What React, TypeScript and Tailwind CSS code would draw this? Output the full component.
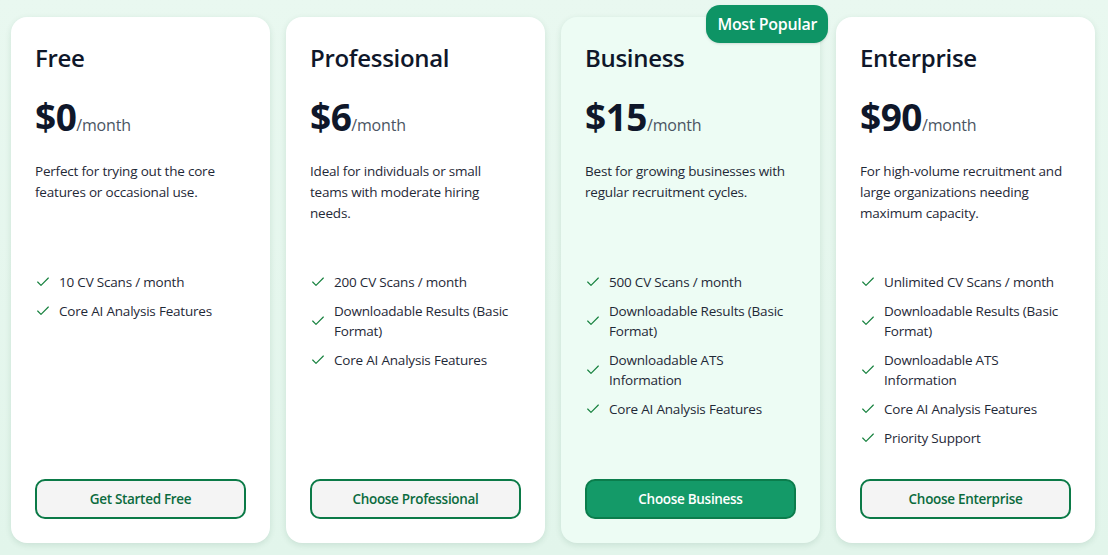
import { Check } from "lucide-react";

type Plan = {
  name: string;
  price: string;
  desc: string;
  features: string[];
  cta: string;
  popular?: boolean;
};

const plans: Plan[] = [
  {
    name: "Free",
    price: "$0",
    desc: "Perfect for trying out the core features or occasional use.",
    features: ["10 CV Scans / month", "Core AI Analysis Features"],
    cta: "Get Started Free",
  },
  {
    name: "Professional",
    price: "$6",
    desc: "Ideal for individuals or small teams with moderate hiring needs.",
    features: ["200 CV Scans / month", "Downloadable Results (Basic Format)", "Core AI Analysis Features"],
    cta: "Choose Professional",
  },
  {
    name: "Business",
    price: "$15",
    desc: "Best for growing businesses with regular recruitment cycles.",
    features: [
      "500 CV Scans / month",
      "Downloadable Results (Basic Format)",
      "Downloadable ATS Information",
      "Core AI Analysis Features",
    ],
    cta: "Choose Business",
    popular: true,
  },
  {
    name: "Enterprise",
    price: "$90",
    desc: "For high-volume recruitment and large organizations needing maximum capacity.",
    features: [
      "Unlimited CV Scans / month",
      "Downloadable Results (Basic Format)",
      "Downloadable ATS Information",
      "Core AI Analysis Features",
      "Priority Support",
    ],
    cta: "Choose Enterprise",
  },
];

function PlanCard({ plan }: { plan: Plan }) {
  return (
    <div
      className={`relative flex h-[526px] w-[259px] flex-col rounded-2xl px-6 pt-6 pb-6 shadow-[0_2px_6px_rgba(20,80,50,0.12)] ${
        plan.popular ? "bg-[#edfcf4]" : "bg-white"
      }`}
    >
      {plan.popular && (
        <span className="absolute -top-3 -right-2 flex h-[38px] items-center rounded-[14px] bg-[#0e9465] px-[11px] text-[16px] font-semibold tracking-[-0.3px] text-white shadow-sm">
          Most Popular
        </span>
      )}
      <h3 className="mt-px text-[24px] leading-8 font-semibold tracking-[-0.3px] text-[#0f172a]">{plan.name}</h3>
      <div className="mt-[23px] flex items-baseline">
        <span className="text-[37px] leading-10 font-bold tracking-[-0.5px] text-[#0f172a]">{plan.price}</span>
        <span className="text-[16px] tracking-[-0.2px] text-[#4b5563]">/month</span>
      </div>
      <p className="mt-6 h-[63px] text-[13.5px] leading-[21px] tracking-[-0.2px] text-[#1f2937]">{plan.desc}</p>
      <ul className="mt-12 flex flex-col gap-[9px]">
        {plan.features.map((f) => (
          <li
            key={f}
            className="flex items-center gap-2 text-[13.5px] leading-5 tracking-[-0.2px] text-[#1f2937]"
          >
            <Check className="h-4 w-4 shrink-0 text-[#15803d]" strokeWidth={1.75} />
            <span>{f}</span>
          </li>
        ))}
      </ul>
      <button
        className={`mt-auto h-[40px] w-full rounded-[10px] border-2 text-[13.5px] font-semibold tracking-[-0.3px] ${
          plan.popular
            ? "border-[#0b7d4c] bg-[#149a68] text-white"
            : "border-[#0b7a47] bg-[#f4f4f4] text-[#0b6b3e]"
        }`}
      >
        {plan.cta}
      </button>
    </div>
  );
}

export default function App() {
  return (
    <div
      className="h-[555px] w-[1108px] overflow-hidden bg-gradient-to-b from-[#e9f8f0] to-[#e2f5eb] pt-[17px] pl-[11px]"
      style={{ fontFamily: '"Open Sans", "Noto Sans", sans-serif' }}
    >
      <div className="flex gap-4">
        {plans.map((p) => (
          <PlanCard key={p.name} plan={p} />
        ))}
      </div>
    </div>
  );
}
